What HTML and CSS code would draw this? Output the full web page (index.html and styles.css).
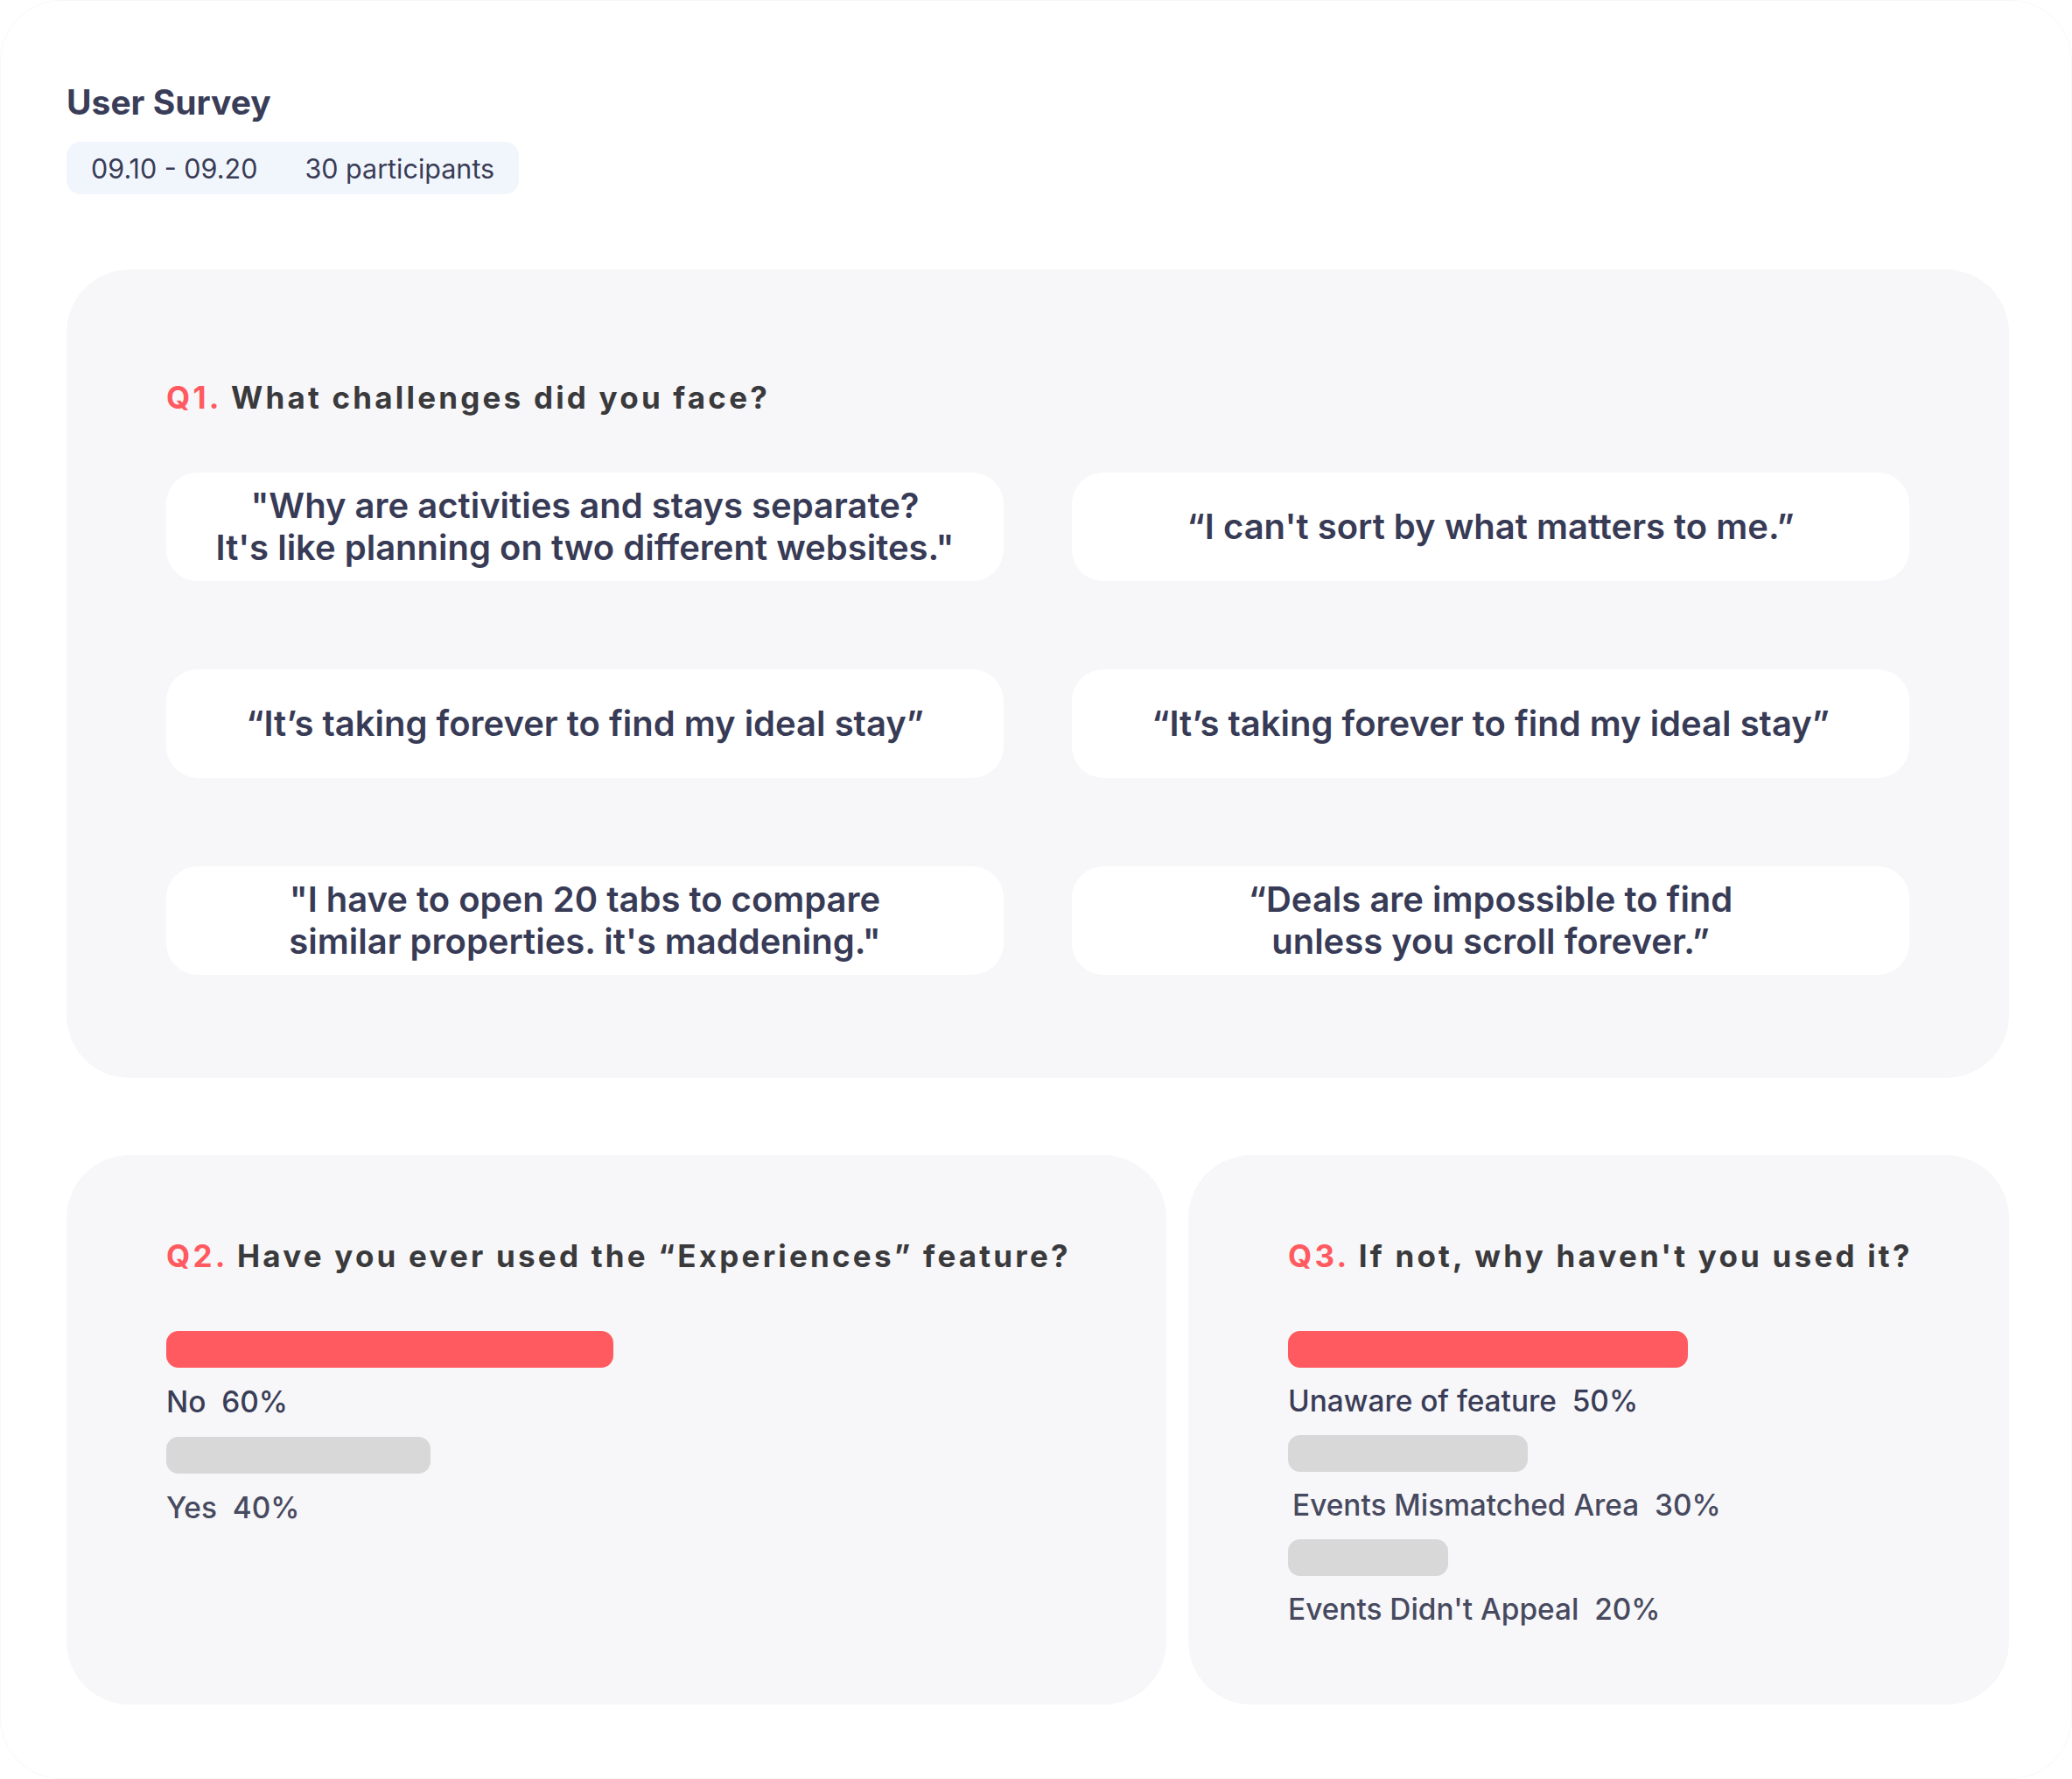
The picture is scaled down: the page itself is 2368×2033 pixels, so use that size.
FILE: index.html
```html
<!DOCTYPE html>
<html lang="en">
<head>
<meta charset="utf-8">
<title>User Survey</title>
<link rel="stylesheet" href="styles.css">
</head>
<body>
<div class="frame">
  <header class="head">
    <h1 class="title">User Survey</h1>
    <div class="pill">
      <span>09.10 - 09.20</span>
      <span>30 participants</span>
    </div>
  </header>

  <section class="card card-q1">
    <h2 class="question"><span class="qnum">Q1.</span> What challenges did you face?</h2>
    <div class="quotes">
      <div class="quote">"Why are activities and stays separate?<br>It's like planning on two different websites."</div>
      <div class="quote">“I can't sort by what matters to me.”</div>
      <div class="quote">“It’s taking forever to find my ideal stay”</div>
      <div class="quote">“It’s taking forever to find my ideal stay”</div>
      <div class="quote">"I have to open 20 tabs to compare<br>similar properties. it's maddening."</div>
      <div class="quote">“Deals are impossible to find<br>unless you scroll forever.”</div>
    </div>
  </section>

  <div class="row">
    <section class="card card-q2">
      <h2 class="question"><span class="qnum">Q2.</span> Have you ever used the “Experiences” feature?</h2>
      <div class="bars">
        <div class="bar bar-red" style="width:511px"></div>
        <div class="label label-top">No&nbsp; 60%</div>
        <div class="bar bar-gray" style="width:302px"></div>
        <div class="label">Yes&nbsp; 40%</div>
      </div>
    </section>
    <section class="card card-q3">
      <h2 class="question"><span class="qnum">Q3.</span> If not, why haven't you used it?</h2>
      <div class="bars bars-tight">
        <div class="bar bar-red" style="width:457px"></div>
        <div class="label label-top">Unaware of feature&nbsp; 50%</div>
        <div class="bar bar-gray" style="width:274px"></div>
        <div class="label label-indent">Events Mismatched Area&nbsp; 30%</div>
        <div class="bar bar-gray" style="width:183px"></div>
        <div class="label">Events Didn't Appeal&nbsp; 20%</div>
      </div>
    </section>
  </div>
</div>
</body>
</html>
```

FILE: styles.css
```css
* {
  box-sizing: border-box;
}

html, body {
  margin: 0;
  padding: 0;
  background: #ffffff;
}

body {
  font-family: Inter, "Noto Sans", "Liberation Sans", sans-serif;
  color: #393c56;
}

.frame {
  width: 2368px;
  height: 2033px;
  border: 1px solid #f8f8f9;
  border-radius: 70px;
  padding: 92px 0 0 75px;
  background: #ffffff;
  overflow: hidden;
}

.head {
  display: flex;
  flex-direction: column;
  align-items: flex-start;
}

.title {
  margin: 0;
  font-size: 39px;
  line-height: 48px;
  font-weight: 700;
  color: #3a3d58;
}

.pill {
  margin-top: 21px;
  height: 60px;
  display: flex;
  align-items: center;
  gap: 54px;
  padding: 0 28px;
  border-radius: 16px;
  background: #f1f6fd;
  font-size: 30.5px;
  font-weight: 400;
  color: #393c55;
}

.card {
  background: #f7f7f9;
  border-radius: 72px;
}

.card-q1 {
  width: 2220px;
  margin-top: 86px;
  padding: 125px 114px 118px 114px;
}

.question {
  margin: 0;
  font-size: 35px;
  line-height: 42px;
  font-weight: 700;
  letter-spacing: 3.2px;
  color: #3a3a3d;
  white-space: nowrap;
}

.qnum {
  color: #ff5a5f;
}

.quotes {
  margin-top: 65px;
  display: grid;
  grid-template-columns: 957px 957px;
  column-gap: 78px;
  row-gap: 101px;
}

.quote {
  height: 124px;
  border-radius: 36px;
  background: #ffffff;
  display: flex;
  align-items: center;
  justify-content: center;
  text-align: center;
  font-size: 40px;
  line-height: 48px;
  font-weight: 600;
  color: #383b56;
}

.row {
  width: 2220px;
  margin-top: 88px;
  display: flex;
  gap: 25px;
}

.card-q2,
.card-q3 {
  height: 628px;
  padding: 94px 114px 0 114px;
}

.card-q2 {
  width: 1257px;
}

.card-q3 {
  width: 938px;
}

.bars {
  margin-top: 65px;
  display: flex;
  flex-direction: column;
  align-items: flex-start;
  gap: 19px;
}

.bars-tight {
  gap: 18px;
}

.bar {
  height: 42px;
  border-radius: 14px;
}

.bar-red {
  background: #ff5a5f;
}

.bar-gray {
  background: #d8d8d8;
}

.label {
  font-size: 33.4px;
  line-height: 41px;
  font-weight: 500;
  color: #474a5f;
}

.label-top {
  color: #3a3d57;
}

.label-indent {
  padding-left: 5px;
}
```
